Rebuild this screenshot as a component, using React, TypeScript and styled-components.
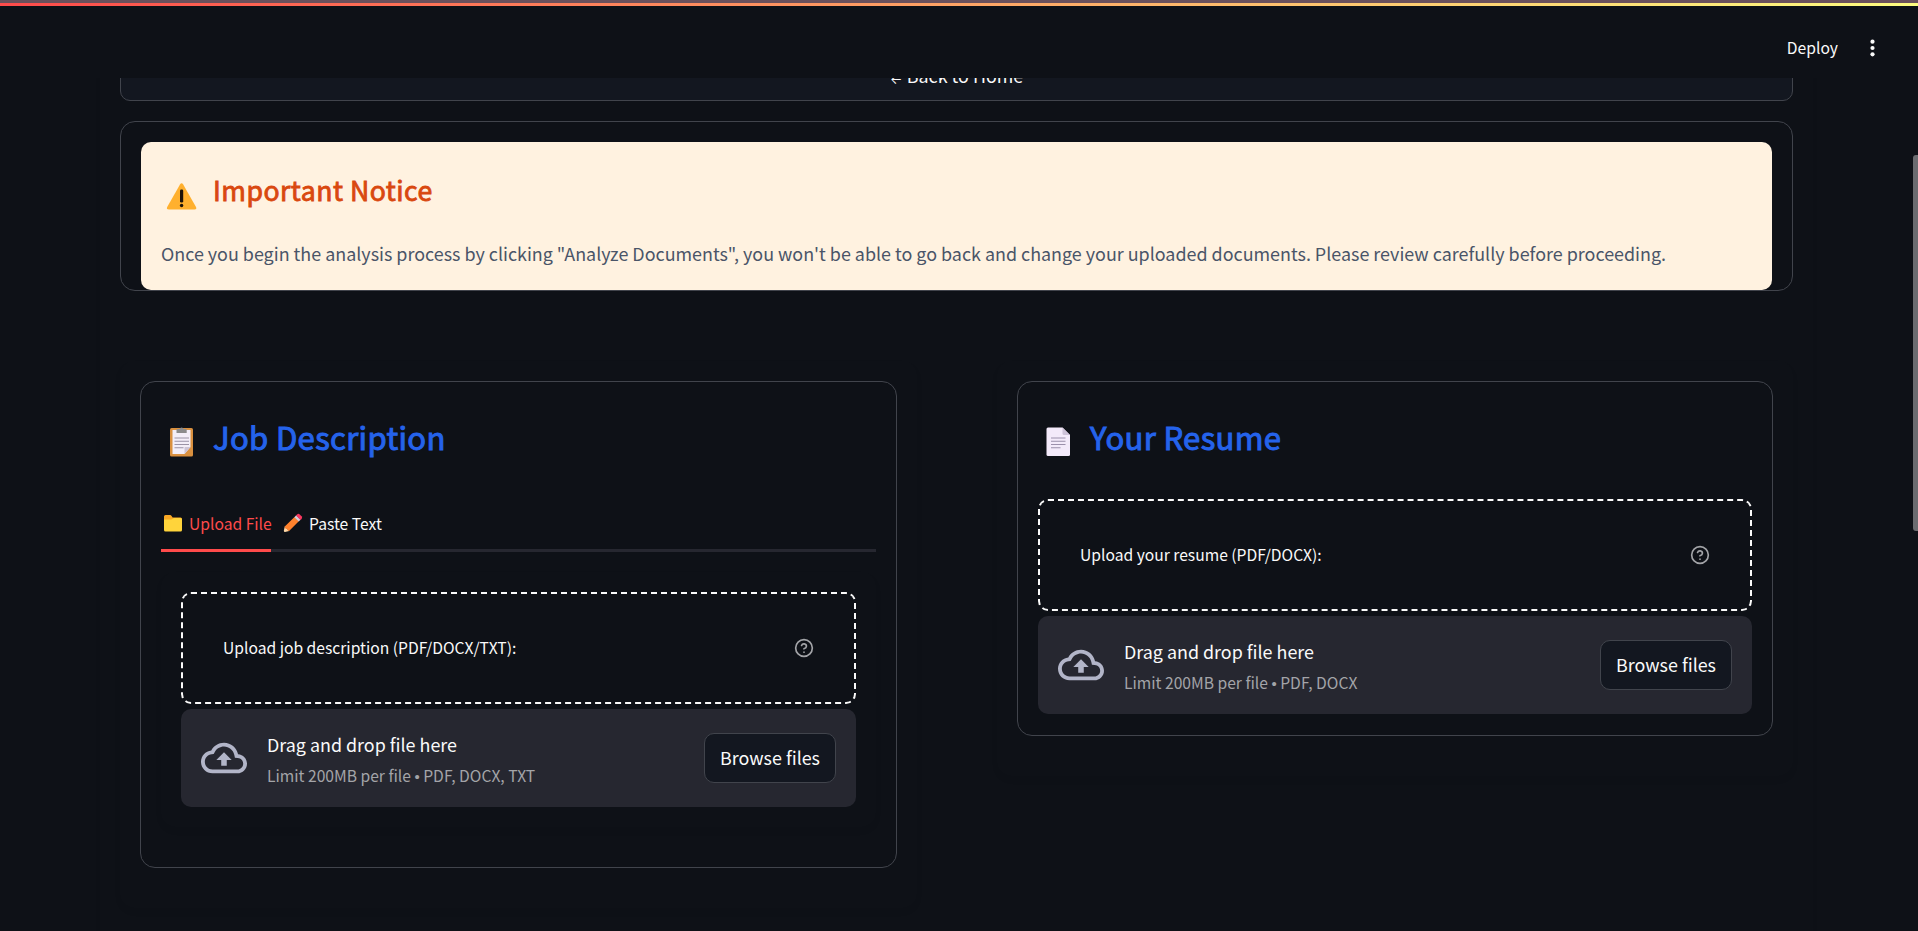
import React from 'react';
import styled, { createGlobalStyle } from 'styled-components';

const Global = createGlobalStyle`
  *, *::before, *::after { box-sizing: border-box; }
  html, body { margin: 0; padding: 0; overflow: hidden; background: #0e1117; }
  body {
    color: #fafafa;
    font-family: "Noto Sans CJK SC", "Noto Sans", sans-serif;
    font-size: 17.9px;
  }
  h2, h3, p { margin: 0; }
  button { font-family: inherit; color: inherit; }
`;

const Page = styled.div`
  position: relative;
  width: 1918px;
  height: 931px;
  overflow: hidden;
  background: #0e1117;
`;

const Decoration = styled.div`
  height: 6px;
  border-top: 3px solid #6b515c;
  background: linear-gradient(90deg, #ff4b4b, #fffd80) padding-box;
`;

const Header = styled.header`
  height: 72px;
  display: flex;
  justify-content: flex-end;
  align-items: center;
  gap: 29px;
  padding: 12px 41px 0 0;
`;

const Deploy = styled.span`
  font-size: 15.65px;
  line-height: 24px;
`;

const Viewport = styled.main`
  height: 853px;
  overflow: hidden;
`;

const Container = styled.div`
  width: 1713px;
  height: 1000px;
  margin-left: 100px;
  padding: 0 20px;
  box-shadow: 0 4px 6px rgba(0, 0, 0, 0.05);
`;

const BackButton = styled.button`
  display: flex;
  align-items: center;
  justify-content: center;
  gap: 4px;
  width: 100%;
  height: 50px;
  margin-top: -27px;
  padding: 0 0 3px;
  border: 1px solid #41444c;
  border-radius: 10px;
  background: #131720;
  font-size: 17.9px;
`;

const Arrow = styled.span`
  width: 13px;
  padding-top: 8px;
  font-family: "Inter", sans-serif;
  font-size: 13px;
  line-height: 20px;
`;

const Bullet = styled.span`
  font-family: "Liberation Sans", sans-serif;
  font-size: 15px;
  line-height: 1;
`;

const NoticeFrame = styled.section`
  height: 170px;
  margin-top: 20px;
  padding: 20px 20px 0;
  border: 1px solid #41444c;
  border-radius: 15px;
`;

const Notice = styled.div`
  height: 148px;
  padding: 26px 20px 0;
  border-radius: 10px;
  background: #fff2e0;
`;

const TitleRow = styled.div`
  display: flex;
  align-items: center;
  gap: 12px;
`;

const NoticeTitle = styled.h3`
  color: #d9480f;
  font-size: 26.6px;
  font-weight: 400;
  letter-spacing: 0.5px;
  line-height: 38px;
  -webkit-text-stroke: 0.85px currentColor;
`;

const NoticeText = styled.p`
  margin-top: 28px;
  color: #4a5568;
  font-size: 17.91px;
  line-height: 28px;
  white-space: nowrap;
`;

const Columns = styled.div`
  display: grid;
  grid-template-columns: 797px 796px;
  justify-content: space-between;
  align-items: start;
  margin-top: 70px;
`;

const Column = styled.div`
  padding: 20px 20px 40px;
  border-radius: 15px;
  box-shadow: 0 4px 6px rgba(0, 0, 0, 0.05);
`;

const Card = styled.section<{ $h: number }>`
  height: ${(p) => p.$h}px;
  padding: 32px 20px 0;
  border: 1px solid #41444c;
  border-radius: 15px;
`;

const CardTitle = styled.h2`
  color: #2563eb;
  font-size: 31px;
  font-weight: 400;
  letter-spacing: 0.36px;
  line-height: 46px;
  -webkit-text-stroke: 1px currentColor;
`;

const TabList = styled.div`
  display: flex;
  gap: 10px;
  height: 53px;
  margin-top: 39px;
  border-bottom: 3px solid #262730;
`;

const Tab = styled.div<{ $active?: boolean }>`
  display: flex;
  align-items: center;
  gap: 6px;
  width: ${(p) => (p.$active ? '110px' : 'auto')};
  height: 53px;
  padding: 0 0 2px 2px;
  font-size: 15.65px;
  white-space: nowrap;
  color: ${(p) => (p.$active ? '#ff4b4b' : '#fafafa')};
  border-bottom: 3px solid ${(p) => (p.$active ? '#ff4b4b' : 'transparent')};
`;

const TabPanel = styled.div`
  margin-top: 20px;
  padding: 20px;
  border-radius: 15px;
  box-shadow: 0 4px 6px rgba(0, 0, 0, 0.05);
`;

const UploadLabel = styled.div`
  display: flex;
  justify-content: space-between;
  align-items: center;
  height: 112px;
  padding: 0 40px;
  border: 2px dashed #fafafa;
  border-radius: 10px;
  font-size: 15.65px;
`;

const LabelText = styled.span`
  padding-bottom: 1px;
`;

const Dropzone = styled.div`
  display: flex;
  align-items: center;
  height: 98px;
  margin-top: 5px;
  padding: 0 20px;
  border-radius: 10px;
  background: #262730;
`;

const DropText = styled.div`
  flex: 1;
  margin-left: 20px;
  padding-top: 4px;
`;

const DropTitle = styled.div`
  font-size: 17.9px;
  line-height: 30px;
`;

const DropHint = styled.div`
  margin-top: 2px;
  color: #a3a4a8;
  font-size: 15.65px;
  line-height: 30px;
`;

const BrowseButton = styled.button`
  width: 132px;
  height: 50px;
  padding: 0 0 2px;
  border: 1px solid #41444c;
  border-radius: 10px;
  background: #131720;
  font-size: 17.9px;
`;

const ResumeUpload = styled.div`
  margin-top: 39px;
`;

const ScrollThumb = styled.div`
  position: absolute;
  right: 0;
  top: 155px;
  width: 5px;
  height: 376px;
  border-radius: 3px 0 0 3px;
  background: #6b6c70;
`;

const Icon = styled.svg<{ $dy?: number }>`
  display: block;
  flex: none;
  margin-top: ${(p) => p.$dy ?? 0}px;
`;

const MenuDots = () => (
  <Icon width="10" height="20" viewBox="0 0 10 20" fill="#fafafa">
    <circle cx="5.500" cy="3.700" r="2.100" />
    <circle cx="5.500" cy="10" r="2.100" />
    <circle cx="5.500" cy="16.300" r="2.100" />
  </Icon>
);

const WarningIcon = () => (
  <Icon $dy={13} width="40" height="30" viewBox="0 0 40 30">
    <path d="M19 3.600Q20.600 1 22.200 3.600L35 26Q36 28.500 33.500 28.500H8Q5 28.500 6.200 26Z" fill="#ffb02e" />
    <rect x="19" y="8.500" width="3.200" height="13" rx="1.300" fill="#1c1208" />
    <circle cx="20.600" cy="24.500" r="1.700" fill="#1c1208" />
  </Icon>
);

const ClipboardIcon = () => (
  <Icon $dy={10} width="40" height="32" viewBox="0 0 40 32">
    <rect x="9" y="2" width="23" height="28.500" rx="1.600" fill="#d9903f" />
    <path d="M11.500 4h18v17l-6 7h-12z" fill="#f3eef8" />
    <path d="M29.500 21h-5.200q-.8 0-.8.800v6.200z" fill="#cdc4d6" />
    <path d="M15.500 7V4q0-1 1-1h2a2.200 2.200 0 0 1 4.200 0h2q1 0 1 1v3z" fill="#8b8b8b" />
    <path d="M13.500 12h14.500M13.500 15.200h14.500M13.500 18.500h14.500M13.500 21.800h9" stroke="#9b93a6" strokeWidth="1.100" />
  </Icon>
);

const PageIcon = () => (
  <Icon $dy={10} width="40" height="32" viewBox="0 0 40 32">
    <path d="M10 1.500h14.500l7.500 7.500v19.500q0 1.500-1.500 1.500h-20.500q-1.500 0-1.500-1.500v-25.500q0-1.500 1.500-1.500z" fill="#f3eafa" />
    <path d="M24.500 1.500l7.500 7.500h-6q-1.500 0-1.500-1.500z" fill="#cdc2d8" />
    <path d="M13 12h14.500M13 15.200h14.500M13 18.500h14.500M13 21.800h9.500" stroke="#9b90ab" strokeWidth="1.100" />
  </Icon>
);

const FolderIcon = () => (
  <Icon width="20" height="20" viewBox="0 0 20 20">
    <path d="M1 3.500Q1 2 2.500 2H7q1 0 1.600 1l1 1.500H17.500q1.500 0 1.500 1.500V9H1z" fill="#f9a825" />
    <path d="M1 6.500h7q1 0 1.600-.8.600-.7 1.600-.7h6.300q1.500 0 1.500 1.500v10.500q0 1.500-1.500 1.500h-15Q1 18.500 1 17z" fill="#ffd43b" />
  </Icon>
);

const PencilIcon = () => (
  <Icon width="20" height="20" viewBox="0 0 20 20">
    <path d="M1.800 13.500L.8 17.800q0 1.200 1.200 1.200l4.200-1z" fill="#ffd9a8" />
    <path d="M1.500 13.800L11.500 4l4.300 4.300L6.100 18q-1.700-.2-1.900-1.900-2.300-.1-2.700-2.300z" fill="#ff822d" />
    <path d="M11.300 4.200l1.900-1.900 4.400 4.400-1.900 1.900z" fill="#d3cfda" />
    <path d="M13 2.500l1.100-1.100q1.300-1.100 2.600 0l1.900 1.900q1.100 1.300 0 2.600l-1.100 1.100z" fill="#f8375f" />
  </Icon>
);

const HelpIcon = () => (
  <Icon width="20" height="20" viewBox="0 0 24 24" fill="none" stroke="#a3a4a8" strokeWidth="2" strokeLinecap="round" strokeLinejoin="round">
    <circle cx="12" cy="12" r="10" />
    <path d="M9.090 9a3 3 0 0 1 5.830 1c0 2-3 3-3 3M12 17h.01" />
  </Icon>
);

const CloudIcon = () => (
  <Icon width="46" height="46" viewBox="0 0 24 24" fill="#b2b5c8">
    <path d="M19.350 10.040C18.670 6.590 15.640 4 12 4 9.110 4 6.600 5.640 5.350 8.040 2.340 8.360 0 10.910 0 14c0 3.310 2.690 6 6 6h13c2.760 0 5-2.240 5-5 0-2.640-2.050-4.780-4.650-4.960zM19 18H6c-2.210 0-4-1.790-4-4 0-2.050 1.530-3.760 3.560-3.970l1.070-.11.5-.95C8.080 7.140 9.940 6 12 6c2.620 0 4.880 1.860 5.390 4.430l.3 1.500 1.530.11c1.560.1 2.780 1.410 2.780 2.960 0 1.650-1.350 3-3 3zM8 13h2.550v3h2.900v-3H16l-4-4z" />
  </Icon>
);

function Uploader({ label, types }: { label: string; types: string }) {
  return (
    <>
      <UploadLabel>
        <LabelText>{label}</LabelText>
        <HelpIcon />
      </UploadLabel>
      <Dropzone>
        <CloudIcon />
        <DropText>
          <DropTitle>Drag and drop file here</DropTitle>
          <DropHint>
            Limit 200MB per file <Bullet>•</Bullet> {types}
          </DropHint>
        </DropText>
        <BrowseButton>Browse files</BrowseButton>
      </Dropzone>
    </>
  );
}

export default function App() {
  return (
    <Page>
      <Global />
      <Decoration />
      <Header>
        <Deploy>Deploy</Deploy>
        <MenuDots />
      </Header>
      <Viewport>
        <Container>
          <BackButton>
            <Arrow>←</Arrow>
            <span>Back to Home</span>
          </BackButton>
          <NoticeFrame>
            <Notice>
              <TitleRow>
                <WarningIcon />
                <NoticeTitle>Important Notice</NoticeTitle>
              </TitleRow>
              <NoticeText>
                Once you begin the analysis process by clicking "Analyze Documents", you won't be able to go back and
                change your uploaded documents. Please review carefully before proceeding.
              </NoticeText>
            </Notice>
          </NoticeFrame>
          <Columns>
            <Column>
              <Card $h={487}>
                <TitleRow>
                  <ClipboardIcon />
                  <CardTitle>Job Description</CardTitle>
                </TitleRow>
                <TabList>
                  <Tab $active>
                    <FolderIcon />
                    Upload File
                  </Tab>
                  <Tab>
                    <PencilIcon />
                    Paste Text
                  </Tab>
                </TabList>
                <TabPanel>
                  <Uploader label="Upload job description (PDF/DOCX/TXT):" types="PDF, DOCX, TXT" />
                </TabPanel>
              </Card>
            </Column>
            <Column>
              <Card $h={355}>
                <TitleRow>
                  <PageIcon />
                  <CardTitle>Your Resume</CardTitle>
                </TitleRow>
                <ResumeUpload>
                  <Uploader label="Upload your resume (PDF/DOCX):" types="PDF, DOCX" />
                </ResumeUpload>
              </Card>
            </Column>
          </Columns>
        </Container>
      </Viewport>
      <ScrollThumb />
    </Page>
  );
}
